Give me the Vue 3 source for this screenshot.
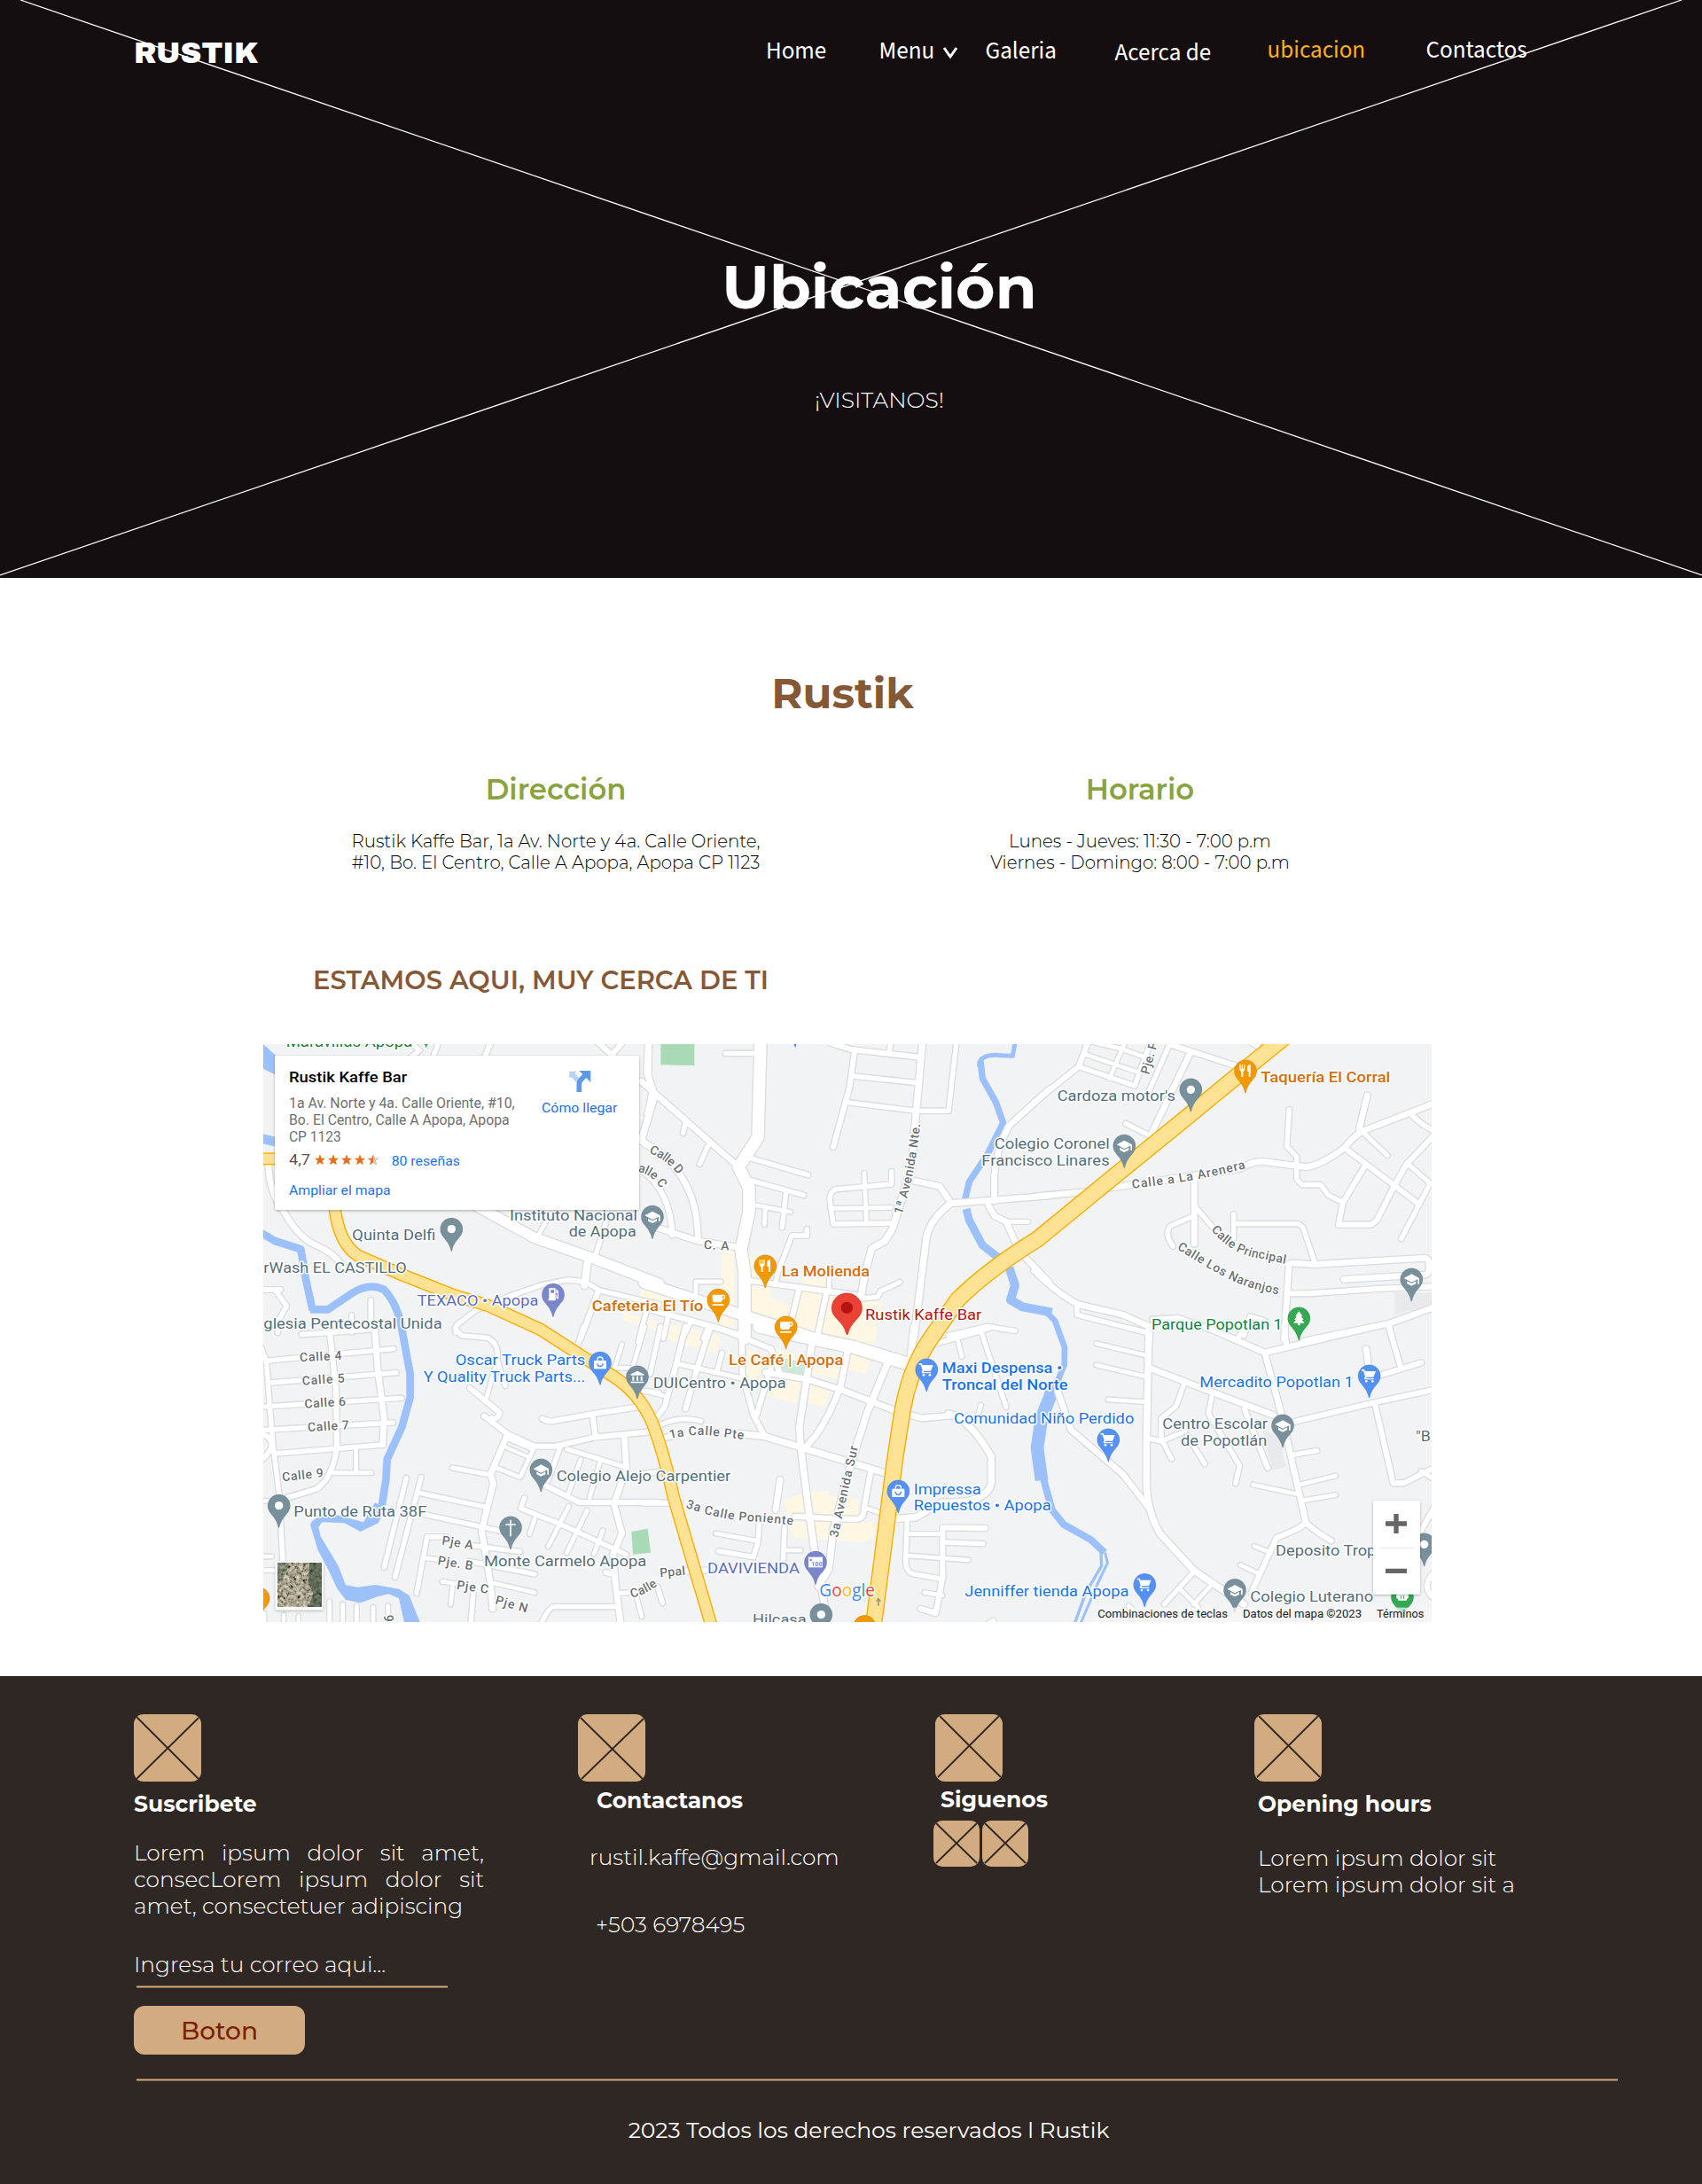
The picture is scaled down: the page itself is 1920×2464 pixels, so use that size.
<script setup>
const nav = [
  { text: 'Home', cls: '' },
  { text: 'Menu', cls: '', arrow: true },
  { text: 'Galeria', cls: '' },
  { text: 'Acerca de', cls: 'low' },
  { text: 'ubicacion', cls: 'active high' },
  { text: 'Contactos', cls: 'high' },
]

// Streets are grouped in map tiles of 1320 x 990 units: [width, path]
const tiles = [
  { x: 0, y: 0, roads: [
    [20, 'M38,430 Q42,530 90,590 Q140,680 200,705 Q260,730 290,775'],
    [16, 'M10,855 H80'], [16, 'M60,855 L100,910 L75,955 L70,1000'], [14, 'M320,940 V1000'], [16, 'M385,890 V970'], [14, 'M150,1005 L300,995'],
    [34, 'M740,570 L940,680 L1140,750 L1360,835'], [14, 'M950,675 L985,610'], [16, 'M1145,740 L1180,630'], [24, 'M1120,750 L1108,840'],
    [16, 'M860,875 L960,840 L1050,822 L1110,828 L1160,858 L1360,905'], [18, 'M1155,860 L1095,1020'], [16, 'M1325,900 L1290,1030'],
    [16, 'M860,875 L740,925 L675,975 L672,1000'], [16, 'M500,85 L550,45 L520,20'], [16, 'M595,70 L615,15'], [18, 'M770,70 L792,15'],
    [18, 'M1150,15 L1200,60 L1240,15'], [18, 'M1200,60 L1260,110'], [22, 'M1325,15 L1320,120 L1345,200 L1300,350 L1360,390'],
  ] },
  { x: 1320, y: 0, roads: [
    [40, 'M384,10 L375,340 L310,440 L345,510 V590 L318,720 L330,800 V1020'], [20, 'M-20,150 L310,440'], [16, 'M130,290 L122,325'], [16, 'M205,370 L178,430'],
    [16, 'M265,55 H370'], [16, 'M15,190 L0,260'], [14, 'M7,10 V160'], [16, 'M350,410 L545,467'], [16, 'M350,485 L530,535'], [14, 'M360,568 L485,592'],
    [14, 'M400,575 L397,635'], [16, 'M470,525 L457,645'], [20, 'M20,640 L170,690 L310,712'], [18, 'M-20,450 Q80,520 85,670'], [20, 'M-10,360 Q175,460 172,690'],
    [16, 'M541,650 V672 H490 L445,790 L435,830'], [18, 'M350,825 L720,875'], [16, 'M720,885 L780,880 L790,860 L855,830'], [18, 'M620,20 L690,42 L920,68'],
    [16, 'M820,45 L825,15'], [18, 'M702,50 L685,170 L630,372'], [16, 'M695,132 L915,155'], [16, 'M670,220 L910,250 H1020 L1047,15'],
    [22, 'M932,15 L910,260 L895,440 L830,650 L805,690 L760,715 L740,790 L725,870'], [16, 'M827,455 V498 L640,515 Q620,520 618,550 L630,633 L825,630'],
    [14, 'M735,460 L742,625'], [14, 'M620,580 L825,577'], [20, 'M905,487 L990,505 L1030,563 L1360,537'], [22, 'M1025,565 Q955,620 945,680 L903,1020'],
    [20, 'M1360,178 L1225,300 Q1180,380 1175,470 V555'], [20, 'M1155,570 L1175,605 L1215,625 L1260,725 L1360,830'], [14, 'M1215,625 H1290'],
    [14, 'M165,870 V828 H250'], [18, 'M-20,915 L150,960 L330,1012'], [36, 'M-10,832 L320,940 L540,1010'], [18, 'M515,850 L490,950'], [18, 'M608,860 L575,1020'],
    [14, 'M616,860 V820'], [16, 'M70,950 L55,1020'], [16, 'M145,970 L120,1020'], [16, 'M210,975 L190,1020'], [16, 'M1020,1010 L1150,980 L1245,994'],
  ] },
  { x: 2640, y: 0, roads: [
    [18, 'M-10,220 L140,100 L175,10'], [16, 'M140,100 L330,165 L385,15'], [14, 'M160,58 L345,120'], [14, 'M245,140 L298,15'], [14, 'M285,40 L370,70'], [14, 'M180,15 L285,40'],
    [16, 'M452,15 L380,180'], [18, 'M450,25 L680,100'], [20, 'M515,60 L390,320'], [16, 'M300,293 L405,345'], [16, 'M720,15 L765,45'],
    [20, 'M-10,540 L150,525 L320,500 L690,445 Q740,412 790,425 L910,440 Q960,435 1040,375 Q1080,325 1110,315 L1350,222'],
    [16, 'M853,245 L845,370 L878,405 V480 L895,500 H960 L985,535 L1035,560'], [20, 'M1117,198 L1090,310'], [16, 'M1100,320 L1185,400'], [18, 'M1040,375 L1285,560'],
    [18, 'M1265,260 Q1300,300 1350,320'], [18, 'M1350,325 L1250,430 L1205,510 L1150,620 L1130,635 H1020 L1035,560 L1110,435'], [16, 'M1255,430 L1330,495 L1232,683'],
    [20, 'M532,480 V700'], [16, 'M530,605 L450,640 Q430,670 460,708'], [16, 'M535,575 L600,650'], [16, 'M665,600 V680'],
    [16, 'M670,632 H885 L900,645 L940,765'], [20, 'M860,765 L940,770 L1150,757 L1310,748 Q1328,748 1326,775 Q1330,808 1300,805 L1038,820'], [20, 'M852,770 L836,1025'], [18, 'M845,868 H920 L1150,852 L1350,844'],
    [20, 'M-10,790 Q70,870 140,905 L290,940 L380,980 V1020'], [16, 'M135,905 V940 L370,1000'], [16, 'M390,955 L480,950 L640,1010'], [16, 'M700,1010 L720,945 L770,960'],
    [20, 'M900,1030 L1190,970 L1350,912'], [16, 'M1190,970 L1205,1030'],
  ] },
  { x: 0, y: 990, roads: [
    [16, 'M10,50 L32,110 L42,250 L55,400 L75,560 L90,840'], [16, 'M40,105 L462,65'], [16, 'M45,180 L472,146'], [16, 'M10,262 L490,232'], [16, 'M20,340 L460,315'],
    [18, 'M247,20 L267,200 L270,390 Q260,500 200,540 L100,570'], [16, 'M60,420 L425,390'], [20, 'M398,-10 L408,130 L430,300 L425,390'], [14, 'M150,18 L260,10 L400,0'],
    [14, 'M335,400 V480'], [14, 'M250,485 H387'], [14, 'M0,580 H60'], [18, 'M10,350 Q90,380 10,445'], [14, 'M0,768 H50'], [14, 'M0,815 H60'],
    [16, 'M670,-5 L690,20 L780,28 Q822,50 812,100 L840,190'], [14, 'M805,130 L775,235'], [18, 'M720,198 L820,280 Q820,305 795,300'], [18, 'M768,292 L850,355 L940,395 L1010,395 L1140,365 L1360,343'],
    [20, 'M845,360 L790,490 L800,520 L760,680 L790,860 L797,945'], [12, 'M850,370 L930,405'], [12, 'M845,400 L920,432'], [14, 'M940,395 L890,500 L810,468'], [16, 'M662,468 L780,490'],
    [16, 'M505,503 L430,805'], [16, 'M555,500 L467,838'], [16, 'M545,552 L770,600'], [16, 'M550,622 L840,685'], [16, 'M540,892 L575,702 L640,702'], [14, 'M565,772 L620,780'],
    [16, 'M720,730 L890,752'], [16, 'M720,785 L940,828'], [14, 'M800,858 L940,890'], [14, 'M627,853 L690,862'], [14, 'M662,870 L655,930'], [16, 'M732,890 L722,1010'],
    [18, 'M965,302 Q990,315 1010,308 L1140,285 L1290,262'], [18, 'M1135,290 L1145,360'], [20, 'M1243,365 L1250,470 L1208,590 L1235,690 L1205,760 L1212,850 L1232,1010'],
    [16, 'M1050,405 L1245,465'], [16, 'M1025,400 L985,510'], [18, 'M960,520 L1090,585 H1360'], [14, 'M1095,440 L1050,565'], [14, 'M1160,450 L1125,570'],
    [16, 'M905,570 L892,605 L1030,660 L1250,762'], [14, 'M940,640 L922,692'], [14, 'M1055,598 L985,735'], [14, 'M1117,612 L1048,755'], [14, 'M1170,680 L1140,760'],
    [16, 'M955,1010 Q985,940 1005,938 H1222'], [18, 'M1180,822 L1205,828'], [14, 'M1225,892 L1280,890 L1302,972'], [16, 'M1105,-10 L1080,70'], [14, 'M1235,50 L1210,130 H1270 L1312,-10'], [16, 'M1310,208 L1360,214'],
    [14, 'M245,920 V1000'], [14, 'M290,930 V1000'], [14, 'M337,935 V1000'], [14, 'M393,940 V1000'], [14, 'M443,935 V960'], [12, 'M25,960 V1000'], [12, 'M90,965 V1000'], [12, 'M140,970 V1000'],
  ] },
  { x: 1320, y: 990, roads: [
    [42, 'M380,-10 L520,22 L700,60 L890,118'], [18, 'M230,-10 L420,65 L450,150'], [18, 'M320,-10 L322,150 L360,290 L398,360'], [18, 'M430,90 L370,290'],
    [22, 'M560,30 L535,200 L515,330 L520,400 L545,600 L570,770 L602,940'], [20, 'M683,50 L655,190 Q620,290 570,360 L535,400'], [22, 'M815,110 L745,280 L700,420 L630,680 L615,810 L580,870'],
    [20, 'M400,145 L540,168 L660,205 L840,275 L930,300 L1040,290'], [22, 'M1020,285 Q1090,300 1165,430 V520 Q1150,590 1000,585 L910,635 L850,640'], [22, 'M310,352 L400,362 L805,485'],
    [16, 'M100,115 L320,165'], [18, 'M130,-10 L95,130 L60,260 L30,300'], [16, 'M45,-10 L10,150'], [18, 'M215,-10 L170,130 L130,268'], [16, 'M253,80 L237,140'], [16, 'M40,325 Q110,290 182,310'],
    [18, 'M50,368 L90,360'], [22, 'M903,-10 L890,110'], [16, 'M970,50 L1130,5 L1170,-10'], [16, 'M1130,5 L1215,262'], [14, 'M1050,30 L1065,92'], [14, 'M1130,255 L1120,290'], [14, 'M0,210 L60,225'],
    [18, 'M500,632 L600,638 L710,642 Q735,640 735,600 L757,480'], [14, 'M735,602 L790,620'], [20, 'M450,508 L435,610'], [16, 'M380,650 L375,720 L360,770 L242,750'], [14, 'M232,690 L375,716'],
    [16, 'M465,670 L460,790'], [14, 'M465,747 H520'], [18, 'M-10,587 H110'], [16, 'M-10,487 L50,480'], [18, 'M130,818 L210,814'],
    [16, 'M880,650 L875,780 Q875,820 900,827 L1000,845'], [14, 'M880,692 H1000'], [18, 'M1145,672 L1000,670 L1000,840 L977,960 L925,945'], [16, 'M1000,720 L1137,725'], [14, 'M880,765 L1087,780'],
    [14, 'M938,890 L1000,900'], [16, 'M35,870 L52,925'], [16, 'M1130,1010 L1172,985'],
  ] },
  { x: 2640, y: 990, roads: [
    [22, 'M378,-10 L370,380 V490 Q365,600 415,690 L530,815 L700,930'], [14, 'M200,47 L370,88'], [14, 'M200,120 L370,160'], [14, 'M240,237 L365,245'], [20, 'M380,130 L600,215 L800,290'],
    [20, 'M570,-10 L770,78 L1140,-10'], [16, 'M680,30 L700,-10'], [18, 'M845,60 L835,-10'], [20, 'M770,78 L830,300 L870,480 L910,655'], [18, 'M870,312 L1150,245 L1350,202'], [18, 'M1190,-10 L1228,120'],
    [20, 'M1113,65 L1125,150'], [18, 'M1160,155 L1300,112'], [18, 'M1145,260 L1205,520 H1240 L1350,465'], [16, 'M1300,480 L1350,510'], [16, 'M495,190 L470,260 L420,300 V370 L455,438'], [16, 'M375,368 L420,378 L500,345'],
    [16, 'M590,230 L580,285 L685,460 L672,520'], [16, 'M510,360 L567,455'], [18, 'M702,270 L780,468'], [16, 'M860,425 L947,410'], [14, 'M880,527 L1010,495'], [14, 'M890,580 L1010,560'], [14, 'M730,525 L880,557'],
    [18, 'M995,715 Q950,690 910,655 L880,675 L810,705 L725,890'], [14, 'M735,733 L790,755'], [14, 'M688,797 L750,827'], [20, 'M70,210 L115,340 L290,490 L375,600'], [16, 'M535,815 L430,930'],
    [14, 'M585,870 L530,930'], [14, 'M480,875 L545,940'], [14, 'M310,935 L350,975'], [18, 'M1350,590 L1300,680'], [18, 'M1350,815 Q1290,870 1350,915'],
  ] },
]

const rivers = [
  [32, 'M0,340 L75,357'],
  [26, 'M10,660 L60,690 L148,718 L165,820 L188,925'],
  [26, 'M180,922 H240 L320,868 Q380,830 430,855 Q480,910 492,1000 L518,1140 V1220 L490,1320 L440,1430 L436,1500 L420,1600'],
  [15, 'M2565,20 L2557,64 L2520,62 Q2440,55 2444,100'],
  [22, 'M2448,80 L2455,140 L2500,220 L2525,290 L2470,400 L2410,490 L2396,550'],
  [27, 'M2400,582 L2410,620 L2455,705 L2520,755'],
  [30, 'M2545,780 L2565,840 L2550,890 L2590,913 L2690,932'],
  [20, 'M2665,925 L2700,960 L2733,1050 L2732,1110 L2690,1210'],
  [44, 'M2690,1200 L2655,1290 L2640,1390 L2655,1500'],
  [24, 'M2660,1490 L2690,1600 L2730,1650 L2820,1700 L2868,1745'],
  [10, 'M2855,1730 L2858,1790 L2805,1880 L2765,1990'],
  [9, 'M2870,1745 L2878,1780 L2840,1860 L2785,1990'],
]

const highways = [
  [34, 'M0,412 H70'],
  [36, 'M262,570 Q275,700 345,742 Q420,775 480,800 L660,872 L780,908 L960,990 L1200,1145 Q1290,1200 1335,1300 Q1375,1400 1410,1560 L1540,2000'],
  [50, 'M3478,0 L3345,108 L3140,277 L2890,480 L2640,685 Q2470,790 2370,890 L2280,1020 Q2210,1120 2185,1260 L2160,1420 L2085,2000'],
]

const blocks = [
  'M1575,725 H1615 V1010 L1560,980 Z', 'M1660,740 L1690,735 V830 H1660Z', 'M1838,820 L1930,815 V850 L1850,835Z', 'M1700,840 L1745,850 L1735,880 L1830,920 L1800,1000 L1660,960 L1670,850Z', 'M1840,860 L1915,868 L1885,1000 L1810,975Z', 'M1940,870 L2115,900 L2090,1040 L1910,1000Z',
  'M1300,850 H1340 L1420,880 V910 L1290,900Z', 'M1240,930 L1420,985 L1410,1010 L1240,960Z', 'M1340,960 L1570,1010 L1555,1070 L1390,1025Z', 'M1660,1060 L1730,1080 L1690,1200 L1650,1150Z', 'M1730,1050 L1850,1080 V1130 L1760,1115Z', 'M1710,1150 L1840,1165 L1825,1240 L1710,1210Z', 'M1870,1170 L1940,1200 L1920,1255 L1865,1240Z', 'M2005,1070 L2075,1090 L2065,1140 L2000,1125Z', 'M1880,1080 L1980,1100 L1970,1160 L1880,1140Z',
  'M1780,1570 L1860,1540 L1935,1535 V1555 L2035,1562 V1625 L1800,1620Z', 'M1800,1640 L2090,1640 V1690 L2050,1710 L1815,1695Z', 'M1935,1000 L2090,1020 L2080,1060 L1935,1030Z',
]

const pins = [
  [658, 650, 'grey', 'dot'], [1338, 608, 'grey', 'school'], [1002, 872, 'violet', 'fuel'], [1720, 775, 'orange', 'fork'], [1561, 890, 'orange', 'cup'], [1790, 982, 'orange', 'cup'],
  [3345, 115, 'orange', 'fork'], [3160, 178, 'grey', 'dot'], [2935, 368, 'grey', 'school'], [3907, 820, 'grey', 'school'], [3526, 952, 'green', 'tree'],
  [1161, 1103, 'blue', 'bag'], [1287, 1150, 'grey', 'museum'], [961, 1465, 'grey', 'school'], [74, 1586, 'grey', 'dot'], [858, 1660, 'grey', 'cross'], [5, 1900, 'orange', ''],
  [2266, 1126, 'blue', 'cart'], [2170, 1537, 'blue', 'bag'], [1890, 1778, 'violet', 'card'], [1909, 1955, 'grey', 'dot'], [2056, 1995, 'orange', ''],
  [3764, 1147, 'blue', 'cart'], [3471, 1315, 'grey', 'school'], [2881, 1363, 'blue', 'cart'], [3004, 1854, 'blue', 'cart'], [3309, 1872, 'grey', 'school'], [3950, 1717, 'grey', 'dot'], [3876, 1895, 'green', 'flower'],
]
const pinColors = { grey: '#78909c', violet: '#7986cb', orange: '#f29900', green: '#34a853', blue: '#5491f5' }

// x, baseline, drawn length, kind, text
const places = [
  [98, 32, 428, 'park', 'Maravillas Apopa'], [322, 688, 282, 'poi', 'Quinta Delfi'], [855, 622, 432, 'poi', 'Instituto Nacional'], [1055, 676, 228, 'poi', 'de Apopa'],
  [22, 798, 484, 'poi', 'rWash EL CASTILLO'], [542, 908, 410, 'bank', 'TEXACO • Apopa'], [22, 986, 604, 'poi', 'glesia Pentecostal Unida'],
  [1133, 926, 377, 'food', 'Cafeteria El Tío'], [1775, 811, 298, 'food', 'La Molienda'], [2058, 956, 394, 'main', 'Rustik Kaffe Bar'],
  [2495, 378, 390, 'poi', 'Colegio Coronel'], [2452, 434, 433, 'poi', 'Francisco Linares'], [2708, 215, 400, 'poi', "Cardoza motor's"], [3397, 153, 438, 'food', 'Taquería El Corral'],
  [3027, 991, 443, 'park', 'Parque Popotlan 1'], [671, 1110, 440, 'shop', 'Oscar Truck Parts'], [563, 1166, 548, 'shop', 'Y Quality Truck Parts...'],
  [1596, 1110, 388, 'food', 'Le Café | Apopa'], [1340, 1187, 450, 'poi', 'DUICentro • Apopa'], [1013, 1502, 590, 'poi', 'Colegio Alejo Carpentier'],
  [124, 1623, 450, 'poi', 'Punto de Ruta 38F'], [768, 1792, 550, 'poi', 'Monte Carmelo Apopa'], [2318, 1138, 407, 'shop strong', 'Maxi Despensa •'], [2318, 1193, 426, 'shop strong', 'Troncal del Norte'],
  [2358, 1307, 610, 'shop', 'Comunidad Niño Perdido'], [2222, 1547, 228, 'shop', 'Impressa'], [2222, 1602, 465, 'shop', 'Repuestos • Apopa'], [1524, 1816, 312, 'bank', 'DAVIVIENDA'],
  [1677, 1989, 182, 'poi', 'Hilcasa'], [2395, 1892, 555, 'shop', 'Jenniffer tienda Apopa'], [3190, 1184, 520, 'shop', 'Mercadito Popotlan 1'],
  [3064, 1326, 356, 'poi', 'Centro Escolar'], [3126, 1382, 292, 'poi', 'de Popotlán'], [3921, 1367, 50, 'poi', '"B'], [3447, 1756, 340, 'poi', 'Deposito Trop'], [3361, 1910, 417, 'poi', 'Colegio Luterano'],
]

// Street names set along their street: path, drawn length, text
const streets = [
  ['M145,1099 L300,1091', 142, 'Calle 4'], ['M153,1178 L310,1168', 144, 'Calle 5'], ['M161,1256 L320,1246', 140, 'Calle 6'], ['M172,1335 L330,1326', 140, 'Calle 7'], ['M86,1504 L250,1486', 140, 'Calle 9'],
  ['M624,1717 L780,1742', 106, 'Pje A'], ['M610,1785 L780,1812', 120, 'Pje. B'], ['M674,1868 L830,1891', 108, 'Pje C'], ['M804,1918 L960,1962', 112, 'Pje N'],
  ['M1268,1899 Q1330,1880 1362,1850 L1390,1820', 98, 'Calle'], ['M1364,1828 L1500,1815', 86, 'Ppal'], ['M1398,1360 Q1480,1340 1550,1350 L1700,1368', 250, '1a Calle Pte'],
  ['M1450,1592 Q1580,1640 1700,1640 L1900,1660', 370, '3a Calle Poniente'], ['M1965,1695 L2060,1270 L2090,1180', 315, '3a Avenida Sur'], ['M2182,602 Q2225,480 2246,280 L2255,180', 315, '1ª Avenida Nte.'],
  ['M1326,392 Q1400,420 1440,490', 125, 'Calle D'], ['M1288,456 Q1345,465 1374,530', 100, 'alle C'], ['M1511,717 L1700,726', 86, 'C. A'], ['M3018,128 L3060,-20', 112, 'Pje. P'],
  ['M2962,512 Q3180,490 3360,440', 390, 'Calle a La Arenera'], ['M3228,652 Q3300,740 3400,750 Q3480,770 3560,780', 285, 'Calle Principal'], ['M3112,716 Q3210,780 3300,825 Q3400,870 3560,885', 380, 'Calle Los Naranjos'],
  ['M430,1955 V2010', 24, '9'],
]
</script>

<template>
  <div class="page">
    <header class="hero">
      <svg class="cross" viewBox="0 0 1920 652" aria-hidden="true">
        <path d="M23,0 L1920,649 M0,649 L1897,0" />
      </svg>
      <nav class="nav">
        <span class="logo">RUSTIK</span>
        <a v-for="item in nav" :key="item.text" :class="item.cls">{{ item.text }}<svg v-if="item.arrow" class="chevron" viewBox="0 0 18 14"><path d="M2,1 L9,11 L16,1" /></svg></a>
      </nav>
      <h1>Ubicación</h1>
      <p class="tagline">¡VISITANOS!</p>
    </header>

    <main>
      <h2>Rustik</h2>
      <div class="info">
        <section>
          <h3>Dirección</h3>
          <p>Rustik Kaffe Bar, 1a Av. Norte y 4a. Calle Oriente,<br>#10, Bo. El Centro, Calle A Apopa, Apopa CP 1123</p>
        </section>
        <section>
          <h3>Horario</h3>
          <p>Lunes - Jueves: 11:30 - 7:00 p.m<br>Viernes - Domingo: 8:00 - 7:00 p.m</p>
        </section>
      </div>
      <h4>ESTAMOS AQUI, MUY CERCA DE TI</h4>

      <svg class="map" viewBox="21 24 3954 1956" preserveAspectRatio="none">
        <defs>
          <filter id="shade" x="-10%" y="-10%" width="120%" height="125%"><feDropShadow dx="0" dy="3" stdDeviation="5" flood-opacity=".3" /></filter>
          <filter id="aerial" x="0" y="0" width="1" height="1">
            <feTurbulence type="fractalNoise" baseFrequency=".09" numOctaves="4" seed="8" />
            <feColorMatrix values="1 .5 0 0 -.36  .95 .5 0 0 -.36  .8 .5 0 0 -.38  0 0 0 0 1" />
          </filter>
          <path v-for="(s, i) in streets" :id="'street' + i" :key="i" :d="s[0]" />
        </defs>
        <rect x="0" y="0" width="4000" height="2000" fill="#f1f3f4" />
        <path v-for="(b, i) in blocks" :key="'b' + i" :d="b" fill="#fef7e4" />
        <path d="M1366,20 H1480 V96 L1366,94Z M1267,1674 L1322,1664 L1332,1745 L1272,1751Z" fill="#a8dab5" />
        <path d="M1768,1085 L1858,1100 L1852,1145 L1760,1128Z" fill="#ceead6" />
        <path d="M3850,865 H3975 V905 L3850,940Z M3400,1320 L3460,1360 L3482,1455 L3435,1465Z" fill="#e8eaed" />
        <g fill="none" stroke="#9cc0f9" stroke-linejoin="round">
          <path v-for="(r, i) in rivers" :key="'v' + i" :stroke-width="r[0]" :d="r[1]" />
        </g>
        <path d="M10,15 L70,68 V132 L10,102Z M180,1650 Q190,1618 270,1618 L360,1642 L400,1575 L434,1600 L410,1645 L350,1674 L295,1645 L220,1642 L208,1660 L215,1690 L275,1790 L300,1855 L340,1862 L400,1854 L480,1868 L515,1890 L555,1990 H500 L480,1900 L445,1885 L410,1893 L350,1915 L300,1905 L270,1865 L240,1800 L205,1735Z" fill="#9cc0f9" />
        <g v-for="layer in ['casing', 'fill']" :key="layer" :class="['roads', layer]">
          <g v-for="t in tiles" :key="t.x + '-' + t.y" :transform="`translate(${t.x} ${t.y})`">
            <path v-for="(r, i) in t.roads" :key="i" :d="r[1]" :stroke-width="layer === 'casing' ? r[0] + 8 : r[0]" />
          </g>
        </g>
        <g fill="none">
          <path v-for="(h, i) in highways" :key="'c' + i" :d="h[1]" :stroke-width="h[0] + 8" stroke="#f9ab00" />
          <path v-for="(h, i) in highways" :key="'h' + i" :d="h[1]" :stroke-width="h[0]" stroke="#fde293" />
        </g>
        <path d="M2103,1925 V1905 M2096,1910 L2103,1901 L2110,1910" fill="none" stroke="#a09a85" stroke-width="5" />

        <text v-for="(s, i) in streets" :key="'s' + i" class="street"><textPath :href="'#street' + i" :textLength="s[1]">{{ s[2] }}</textPath></text>
        <path d="M1814,15 H1828 L1821,37Z" fill="#4285f4" />
        <path d="M563,15 H582 L572,37Z" fill="#34a853" />

        <g v-for="(p, i) in pins" :key="'p' + i" :transform="`translate(${p[0]} ${p[1]})`">
          <path :fill="pinColors[p[2]]" stroke="#00000022" stroke-width="2" d="M0,-38 A38,38 0 0 1 38,0 C38,28 10,34 2,72 Q0,78 -2,72 C-10,34 -38,28 -38,0 A38,38 0 0 1 0,-38Z" />
          <circle v-if="p[3] === 'dot'" r="14" fill="#fff" />
          <path v-else-if="p[3] === 'school'" fill="#fff" d="M-26,-4 L0,-18 L26,-4 V16 H21 V0 L0,10Z M-15,6 L0,14 L15,6 V15 L0,22 L-15,15Z" />
          <path v-else-if="p[3] === 'fork'" fill="#fff" d="M-20,-22 H-16 V-8 H-13 V-22 H-9 V-8 H-6 V-22 H-2 V-6 Q-2,0 -8,2 V20 H-14 V2 Q-20,0 -20,-6Z M6,-14 Q8,-22 17,-22 V20 H11 V2 H6Z" />
          <path v-else-if="p[3] === 'cup'" fill="#fff" fill-rule="evenodd" d="M-20,-18 H20 Q24,-18 24,-10 Q24,-2 14,-2 Q12,8 4,8 H-10 Q-20,8 -20,-2Z M14,-14 V-6 Q20,-6 20,-10 Q20,-14 14,-14Z M-20,14 H18 V19 H-20Z" />
          <g v-else-if="p[3] === 'cart'" fill="#fff"><path d="M-26,-22 H-17 L-14,-16 H22 L14,4 H-9 L-11,8 H15 V12 H-16 Q-19,8 -14,2 L-20,-17 H-26Z" /><circle cx="-10" cy="18" r="4" /><circle cx="11" cy="18" r="4" /></g>
          <g v-else-if="p[3] === 'bag'" fill="none" stroke="#fff"><path fill="#fff" stroke="none" d="M-21,-8 H21 V20 H-21Z" /><path stroke-width="4" d="M-9,-8 V-12 Q-9,-20 0,-20 Q9,-20 9,-12 V-8" /><path stroke="#5491f5" stroke-width="4" d="M-10,2 Q-8,12 0,12 Q8,12 10,2" /></g>
          <path v-else-if="p[3] === 'museum'" fill="#fff" d="M-22,-9 L0,-20 L22,-9 V-5 H-22Z M-17,-2 H-11 V13 H-17Z M-3,-2 H3 V13 H-3Z M11,-2 H17 V13 H11Z M-22,16 H22 V21 H-22Z" />
          <path v-else-if="p[3] === 'tree'" fill="#fff" d="M0,-24 L12,-8 H7 L16,5 H10 L19,16 H4 V24 H-4 V16 H-19 L-10,5 H-16 L-7,-8 H-12Z" />
          <path v-else-if="p[3] === 'cross'" fill="none" stroke="#fff" stroke-width="5" d="M0,-26 V30 M-17,-10 H17" />
          <path v-else-if="p[3] === 'fuel'" fill="#fff" fill-rule="evenodd" d="M-14,-22 H8 V20 H-16 V14 H-14Z M-8,-16 V-6 H3 V-16Z M10,-20 L18,-12 V12 Q14,18 10,10 V0 H13 V8 H15 V-4 H10Z" />
          <g v-else-if="p[3] === 'card'"><path fill="#fff" d="M-24,-18 H24 V17 H-24Z" /><circle cx="-16" cy="-8" r="4" fill="#7986cb" /><text x="-14" y="12" font-size="21" fill="#7986cb" font-weight="700">100</text></g>
          <g v-else-if="p[3] === 'flower'" fill="#fff"><circle cy="-12" r="8" /><circle cx="-13" cy="-2" r="8" /><circle cx="13" cy="-2" r="8" /><path d="M-3,-4 H3 V6 L18,2 L14,12 H-14 L-18,2 L-3,6Z" /></g>
        </g>
        <path d="M1996,867 A51,51 0 0 1 2047,918 C2047,952 2010,960 2000,1003 Q1997,1012 1994,1003 C1984,960 1945,952 1945,918 A51,51 0 0 1 1996,867Z" fill="#ea4335" stroke="#c5221f" stroke-width="2" />
        <circle cx="1996" cy="916" r="20" fill="#b31412" />

        <text v-for="(l, i) in places" :key="'l' + i" :x="l[0]" :y="l[1]" :textLength="l[2]" lengthAdjust="spacingAndGlyphs" :class="['place', l[3]]">{{ l[4] }}</text>

        <text x="1903" y="1894" class="google" textLength="188" lengthAdjust="spacingAndGlyphs"><tspan fill="#4285f4">G</tspan><tspan fill="#ea4335">o</tspan><tspan fill="#fbbc04">o</tspan><tspan fill="#4285f4">g</tspan><tspan fill="#34a853">l</tspan><tspan fill="#ea4335">e</tspan></text>

        <rect x="2825" y="1931" width="1160" height="60" fill="#f5f5f5" opacity=".75" />
        <g class="legal">
          <text x="2845" y="1965" textLength="440" lengthAdjust="spacingAndGlyphs">Combinaciones de teclas</text>
          <text x="3336" y="1965" textLength="402" lengthAdjust="spacingAndGlyphs">Datos del mapa ©2023</text>
          <text x="3789" y="1965" textLength="160" lengthAdjust="spacingAndGlyphs">Términos</text>
        </g>

        <!-- place card -->
        <rect x="60" y="63" width="1233" height="522" rx="5" fill="#fff" filter="url(#shade)" />
        <g class="card">
          <text x="108" y="153" textLength="400" lengthAdjust="spacingAndGlyphs" class="name">Rustik Kaffe Bar</text>
          <text x="108" y="240" textLength="764" lengthAdjust="spacingAndGlyphs">1a Av. Norte y 4a. Calle Oriente, #10,</text>
          <text x="108" y="297" textLength="746" lengthAdjust="spacingAndGlyphs">Bo. El Centro, Calle A Apopa, Apopa</text>
          <text x="108" y="354" textLength="176" lengthAdjust="spacingAndGlyphs">CP 1123</text>
          <text x="108" y="433" textLength="72" lengthAdjust="spacingAndGlyphs" class="score">4,7</text>
          <text x="455" y="434" textLength="232" lengthAdjust="spacingAndGlyphs" class="link">80 reseñas</text>
          <text x="108" y="535" textLength="344" lengthAdjust="spacingAndGlyphs" class="link">Ampliar el mapa</text>
          <text x="963" y="255" textLength="256" lengthAdjust="spacingAndGlyphs" class="link">Cómo llegar</text>
        </g>
        <path v-for="n in 5" :key="'star' + n" :transform="`translate(${213 + (n - 1) * 45} 416)`" fill="#e7711b" d="M0,-19 L5,-6 L18,-6 L8,3 L12,17 L0,9 L-12,17 L-8,3 L-18,-6 L-5,-6Z" />
        <path transform="translate(393 416)" fill="#ccc" d="M0,-19 L5,-6 L18,-6 L8,3 L12,17 L0,9Z" />
        <path d="M1062,122 L1090,150" stroke="#b5d1f4" stroke-width="17" /><path d="M1057,116 H1082 L1057,141Z" fill="#b5d1f4" />
        <path d="M1090,186 V158 Q1090,150 1097,143 L1112,128" stroke="#5b9ae8" stroke-width="17" fill="none" /><path d="M1090,114 H1129 V153Z" fill="#5b9ae8" />

        <!-- satellite switch -->
        <rect x="62" y="1775" width="162" height="164" rx="5" fill="#fff" filter="url(#shade)" />
        <rect x="69" y="1779" width="150" height="150" filter="url(#aerial)" />
        <path d="M178,1779 H219 V1929 H175 L190,1880 L172,1850Z" fill="#24402e" opacity=".55" />
        <path d="M69,1779 H112 L90,1830 L69,1850Z" fill="#2e4a38" opacity=".35" />

        <!-- zoom control -->
        <rect x="3777" y="1569" width="159" height="317" rx="5" fill="#fff" filter="url(#shade)" />
        <path d="M3819,1647 H3891 M3855,1614 V1680 M3819,1807 H3891" stroke="#666" stroke-width="16" />
        <path d="M3798,1729 H3918" stroke="#e6e6e6" stroke-width="3" />
      </svg>
    </main>

    <footer>
      <div class="columns">
        <section>
          <svg class="tile" viewBox="0 0 76 76"><path d="M3,3 L73,73 M73,4 L3,73" /></svg>
          <h5 class="s1">Suscribete</h5>
          <p class="about">Lorem ipsum dolor sit amet, consecLorem ipsum dolor sit amet, consectetuer adipiscing</p>
          <p class="field">Ingresa tu correo aqui...</p>
          <div class="underline"></div>
          <button>Boton</button>
        </section>
        <section>
          <svg class="tile" viewBox="0 0 76 76"><path d="M3,4 L73,73 M74,5 L4,73" /></svg>
          <h5 class="s2">Contactanos</h5>
          <p class="mail">rustil.kaffe@gmail.com</p>
          <p class="phone">+503 6978495</p>
        </section>
        <section>
          <svg class="tile shifted" viewBox="0 0 76 76"><path d="M5,2 L74,71 M72,2 L3,71" /></svg>
          <h5 class="s3">Siguenos</h5>
          <div class="social">
            <svg v-for="n in 2" :key="n" class="tile small" viewBox="0 0 52 52"><path d="M3,3 L49,48 M49,3 L3,48" /></svg>
          </div>
        </section>
        <section>
          <svg class="tile" viewBox="0 0 76 76"><path d="M5,2 L74,71 M72,2 L3,71" /></svg>
          <h5 class="s4">Opening hours</h5>
          <p class="hours">Lorem ipsum dolor sit<br>Lorem ipsum dolor sit a</p>
        </section>
      </div>
      <div class="rule"></div>
      <p class="copy">2023 Todos los derechos reservados l Rustik</p>
    </footer>
  </div>
</template>

<style>
body { margin: 0; }
</style>

<style scoped>
.page { width: 1920px; height: 2464px; overflow: hidden; background: #fff; font-family: Montserrat, Inter, "Open Sans", sans-serif; font-weight: 300; }
h1, h2, h3, h4, h5, p { margin: 0; }

.hero { position: relative; box-sizing: border-box; height: 652px; padding-top: 41px; background: #140e10; color: #fff; }
.cross { position: absolute; inset: 0; width: 1920px; height: 652px; fill: none; stroke: #fff; stroke-width: 1.3; }
.nav { position: relative; display: grid; grid-template-columns: 713px 127.5px 120px 146px 172px 179px auto; padding-left: 151px; height: 30px; font: 400 27.1px/34px "Source Sans 3", "Open Sans", sans-serif; white-space: nowrap; }
.nav .low { margin-top: 2px; }
.nav .high { margin-top: -1px; }
.nav .active { color: #fbb01f; }
.logo { margin-top: 4px; font: 400 33px/30px "Archivo Black", Inter, sans-serif; }
.chevron { width: 18px; height: 14px; margin-left: 9px; vertical-align: -1px; fill: none; stroke: #fff; stroke-width: 3; }
h1 { position: relative; margin: 213px 0 0 64px; text-align: center; font-size: 68px; line-height: 80px; font-weight: 700; }
.tagline { position: relative; margin: 72px 0 0 64px; text-align: center; font-size: 25px; line-height: 30px; }

main { height: 1139px; padding-top: 100px; }
h2 { margin-right: 19px; text-align: center; color: #865836; font-size: 48px; line-height: 60px; font-weight: 700; }
.info { display: grid; grid-template-columns: 658px 660px; margin: 59px 0 0 298px; text-align: center; }
h3 { color: #8aa33f; font-size: 32.3px; line-height: 40px; font-weight: 600; }
.info p { margin-top: 26px; font-size: 19.8px; line-height: 24px; color: #000; white-space: nowrap; }
h4 { margin: 103px 0 0 353px; color: #865836; font-size: 29px; line-height: 36px; font-weight: 600; }
.map { display: block; width: 1318px; height: 652px; margin: 54px 0 0 297px; font-family: Roboto, sans-serif; font-weight: 400; }
.roads { fill: none; stroke-linecap: round; stroke-linejoin: round; }
.casing { stroke: #dadce0; }
.fill { stroke: #fff; }
.street { font-size: 42px; font-weight: 500; fill: #6b7075; stroke: #fff; stroke-width: 9px; paint-order: stroke; }
.place { font-size: 51px; fill: #546e7a; stroke: #fff; stroke-width: 9px; stroke-linejoin: round; paint-order: stroke; }
.food { fill: #d56e0c; font-weight: 500; }
.main { fill: #b31412; }
.park { fill: #188038; }
.bank { fill: #5c6bc0; }
.shop { fill: #1a73e8; }
.strong { font-weight: 500; }
.google { font: 500 58px "Open Sans", sans-serif; stroke: #fff; stroke-width: 8px; paint-order: stroke; }
.legal { font-size: 38px; fill: #222; }
.card { font-size: 48px; fill: #6f6f6f; }
.card .name { font-size: 50px; font-weight: 500; fill: #000; }
.card .score { font-size: 50px; fill: #555; }
.card .link { font-size: 46px; fill: #1a73e8; }

footer { box-sizing: border-box; height: 573px; padding-top: 43px; background: #2f2723; color: #fff; font-size: 24.8px; line-height: 30px; }
.columns { display: grid; grid-template-columns: 501px 401px 362px 1fr; height: 384px; padding-left: 151px; }
.tile { display: block; width: 76px; height: 76px; border-radius: 11px; background: #d2ac80; fill: none; stroke: #2f2723; stroke-width: 1.8; }
.small { width: 52px; height: 52px; border-radius: 10px; }
.shifted { margin-left: 2px; }
.social { display: flex; gap: 3px; margin-top: 9px; }
h5 { font-size: 25px; line-height: 30px; font-weight: 700; }
.s1 { margin-top: 10px; }
.s2 { margin: 6px 0 0 21px; }
.s3 { margin: 5px 0 0 8px; }
.s4 { margin: 10px 0 0 4px; }
.about { width: 395px; margin-top: 25px; text-align: justify; }
.field { margin-top: 36px; }
.underline, .rule { box-sizing: border-box; height: 3px; background: #d2ac80; border-block: 1px solid #80694f; }
.underline { width: 351px; margin: 9px 0 0 3px; }
button { display: block; width: 193px; height: 55px; margin-top: 20px; padding: 0; border: 0; border-radius: 12px; background: #d2ac80; color: #7a1f00; font: 500 28px/36px Montserrat, Inter, sans-serif; }
.mail { margin: 34px 0 0 13px; }
.phone { margin: 46px 0 0 20px; }
.hours { margin: 31px 0 0 4px; }
.rule { width: 1671px; margin: 27px 0 0 154px; }
.copy { margin: 40px 0 0 40px; text-align: center; font-size: 25px; font-weight: 400; }
</style>
